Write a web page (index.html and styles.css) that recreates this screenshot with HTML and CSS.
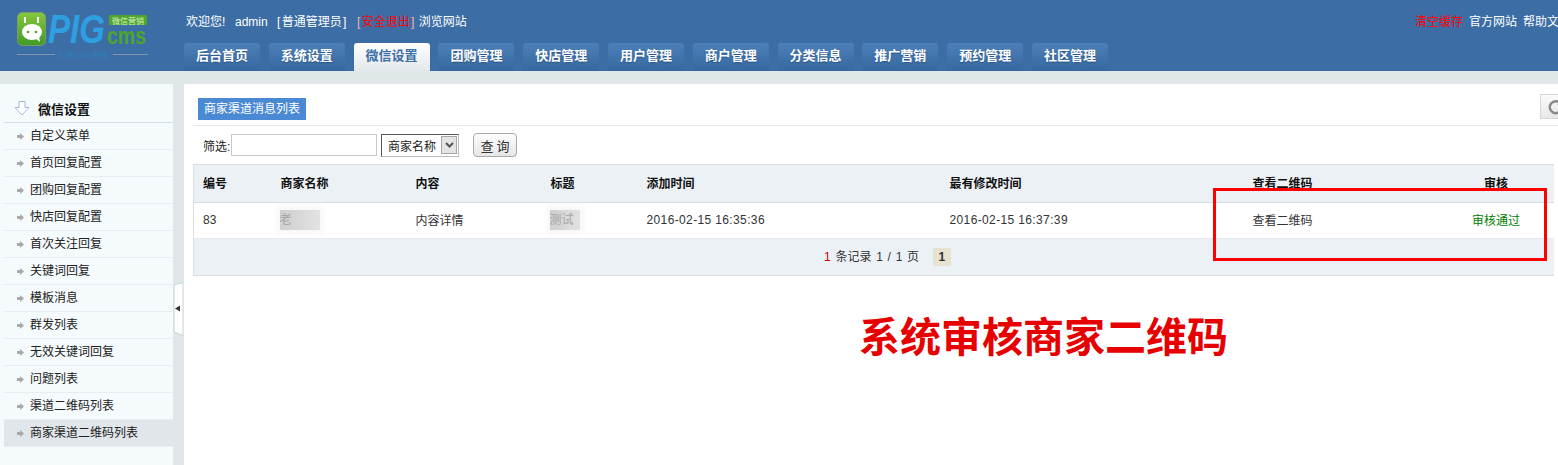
FILE: index.html
```html
<!DOCTYPE html>
<html>
    <head>
        <meta charset="utf-8">
        <title>微信设置</title>
        <link rel="stylesheet" href="styles.css">
    </head>
    <body>
        <div class="header">
            <div class="logo">
                <svg width="150" height="62" viewBox="0 0 150 62">
                    <defs>
                        <linearGradient id="logoGreen" x1="0" y1="0" x2="0" y2="1">
                            <stop offset="0" stop-color="#86c83c"/>
                            <stop offset="1" stop-color="#3f9a26"/>
                        </linearGradient>
                    </defs>
                    <rect x="17.500" y="12.500" width="28" height="33" rx="5" fill="url(#logoGreen)" stroke="#7d9c6a"/>
                    <rect x="24" y="17" width="2" height="6" fill="#fff"/>
                    <rect x="37" y="17" width="2" height="6" fill="#fff"/>
                    <ellipse cx="32" cy="32" rx="10" ry="8" fill="#fff"/>
                    <path d="M35 38l5 4-1-6z" fill="#fff"/>
                    <circle cx="28" cy="32" r="1.300" fill="#4fa52c"/>
                    <circle cx="36" cy="32" r="1.300" fill="#4fa52c"/>
                    <text x="48" y="43" class="logo-pig" textLength="57" lengthAdjust="spacingAndGlyphs">PIG</text>
                    <rect x="109" y="15" width="38" height="10" fill="#4fa52c"/>
                    <text x="112" y="23.500" class="logo-small">微信营销</text>
                    <text x="107" y="44" class="logo-cms" textLength="39" lengthAdjust="spacingAndGlyphs">cms</text>
                    <path d="M17 54.500h38M113 54.500h35" stroke="#7f95a8"/>
                    <text x="58" y="58" class="logo-tag">小猪CMS系统</text>
                </svg>
            </div>
            <div class="header-main">
                <div class="top-line">
                    <div class="user-info">
                        <span class="welcome">欢迎您!</span>
                        <span class="user-name">admin</span>
                        <span class="role"><i class="bracket">[</i>普通管理员<i class="bracket">]</i></span>
                        <span class="logout"><i class="bracket pink">[</i><span class="red">安全退出</span><i class="bracket pink">]</i></span>
                        <span class="browse">浏览网站</span>
                    </div>
                    <div class="top-links">
                        <span class="red">清空缓存</span>
                        <span>官方网站</span>
                        <span>帮助文档</span>
                    </div>
                </div>
                <div class="tabs">
                    <a class="tab">后台首页</a>
                    <a class="tab">系统设置</a>
                    <a class="tab active">微信设置</a>
                    <a class="tab">团购管理</a>
                    <a class="tab">快店管理</a>
                    <a class="tab">用户管理</a>
                    <a class="tab">商户管理</a>
                    <a class="tab">分类信息</a>
                    <a class="tab">推广营销</a>
                    <a class="tab">预约管理</a>
                    <a class="tab">社区管理</a>
                </div>
            </div>
        </div>

        <div class="content">
            <div class="sidebar">
                <div class="side-title">
                    <svg width="16" height="15" viewBox="0 0 16 15"><path d="M5 .5h6v6h4l-7 7.500-7-7.500h4z" fill="#fff" stroke="#a3b8d6"/></svg>
                    <span>微信设置</span>
                </div>
                <ul class="side-menu">
                    <li>自定义菜单</li>
                    <li>首页回复配置</li>
                    <li>团购回复配置</li>
                    <li>快店回复配置</li>
                    <li>首次关注回复</li>
                    <li>关键词回复</li>
                    <li>模板消息</li>
                    <li>群发列表</li>
                    <li>无效关键词回复</li>
                    <li>问题列表</li>
                    <li>渠道二维码列表</li>
                    <li class="current">商家渠道二维码列表</li>
                </ul>
            </div>
            <div class="gutter">
                <svg class="toggle" width="10" height="54" viewBox="0 0 10 54">
                    <path d="M10 .5L1 3v47l9 3.500z" fill="#fff" stroke="#c9d2d6"/>
                    <path d="M2 26.500l5-3v6z" fill="#333"/>
                </svg>
            </div>
            <div class="main">
                <div class="page-title">
                    <span class="title-label">商家渠道消息列表</span>
                    <div class="refresh">
                        <svg width="18" height="18" viewBox="0 0 18 18"><path d="M14.500 5.500A6 6 0 1 0 15.500 11" fill="none" stroke="#8a8a8a" stroke-width="2.500"/><path d="M11 7h6V1z" fill="#8a8a8a"/></svg>
                    </div>
                </div>
                <div class="filter">
                    <label>筛选:</label>
                    <input type="text" class="filter-input">
                    <div class="fake-select">
                        <span>商家名称</span>
                        <b class="select-arrow"><svg width="9" height="6" viewBox="0 0 9 6"><path d="M1 1l3.500 3.500L8 1" fill="none" stroke="#555" stroke-width="2"/></svg></b>
                    </div>
                    <button class="query">查 询</button>
                </div>
                <table class="list">
                    <colgroup>
                        <col class="c1"><col class="c2"><col class="c3"><col class="c4"><col class="c5"><col class="c6"><col class="c7"><col class="c8">
                    </colgroup>
                    <thead>
                        <tr>
                            <th>编号</th>
                            <th>商家名称</th>
                            <th>内容</th>
                            <th>标题</th>
                            <th>添加时间</th>
                            <th>最有修改时间</th>
                            <th>查看二维码</th>
                            <th class="center">审核</th>
                        </tr>
                    </thead>
                    <tbody>
                        <tr>
                            <td>83</td>
                            <td><span class="blur-box wide">老</span></td>
                            <td>内容详情</td>
                            <td><span class="blur-box">测试</span></td>
                            <td class="date">2016-02-15 16:35:36</td>
                            <td class="date">2016-02-15 16:37:39</td>
                            <td>查看二维码</td>
                            <td class="center passed">审核通过</td>
                        </tr>
                    </tbody>
                    <tfoot>
                        <tr>
                            <td colspan="6" class="pager-cell">
                                <div class="pager"><span class="count">1</span> 条记录 1 / 1 页 <b class="page-no">1</b></div>
                            </td>
                            <td colspan="2"></td>
                        </tr>
                    </tfoot>
                </table>
            </div>
        </div>

        <!-- annotation drawn over the screenshot -->
        <div class="mark-box"></div>
        <div class="mark-text">系统审核商家二维码</div>
    </body>
</html>
```

FILE: styles.css
```css
html, body {
    margin: 0;
    height: 465px;
    overflow: hidden;
}
body {
    background: #dfe7e9;
    color: #333;
    font: 12px "Liberation Sans", "Noto Sans CJK SC", sans-serif;
}
.header {
    display: flex;
    height: 71px;
    background: #3c6ea5;
}
.logo {
    width: 184px;
    flex: none;
}
.logo svg {
    display: block;
}
.logo-pig {
    fill: #2e9fe0;
    font: italic bold 40px "Liberation Sans", sans-serif;
}
.logo-cms {
    fill: #4fa52c;
    font: bold 24px "Liberation Sans", sans-serif;
}
.logo-small {
    fill: #d8efc8;
    font-size: 8px;
}
.logo-tag {
    fill: #2f7fb8;
    font-size: 8px;
}
.header-main {
    flex: 1;
    min-width: 0;
}
.top-line {
    display: flex;
    justify-content: space-between;
    height: 43px;
    color: #fff;
    line-height: 44px;
    white-space: nowrap;
}
.user-info {
    display: flex;
    padding-left: 2px;
}
.welcome {
    width: 49px;
}
.role {
    margin-left: 8px;
}
.logout {
    margin-left: 8px;
}
.browse {
    margin-left: 3px;
}
.bracket {
    display: inline-block;
    width: 6px;
    font-style: normal;
    text-align: center;
}
.pink {
    color: #f3b0b0;
}
.top-links {
    display: flex;
    gap: 6px;
    width: 143px;
    flex: none;
    overflow: hidden;
}
.top-links span {
    flex: none;
}
.red {
    color: #f00;
}
.tabs {
    display: flex;
    gap: 8.800px;
    height: 28px;
}
.tab {
    width: 76px;
    flex: none;
    background: linear-gradient(#4d80b8, #35689f);
    border-radius: 3px 3px 0 0;
    color: #fff;
    font-size: 13px;
    font-weight: bold;
    line-height: 25px;
    text-align: center;
    text-shadow: 0 1px 1px #2a5587;
}
.tab.active {
    background: linear-gradient(#fff, #e3e8ec);
    color: #3c6ea5;
    text-shadow: none;
}
.content {
    display: flex;
    height: 381px;
    margin-top: 13px;
}
.sidebar {
    width: 173px;
    flex: none;
    box-sizing: border-box;
    padding-left: 4px;
    background: #f5fafd;
}
.side-title {
    display: flex;
    align-items: center;
    gap: 8px;
    height: 39px;
    box-sizing: border-box;
    padding: 11px 0 0 10px;
    border-bottom: 1px solid #d3dee6;
    color: #111;
    font-size: 13px;
    font-weight: bold;
}
.side-menu {
    margin: 0;
    padding: 0;
    list-style: none;
}
.side-menu li {
    position: relative;
    height: 26px;
    padding-left: 26px;
    border-bottom: 1px solid #e6eef2;
    color: #222;
    line-height: 26px;
}
.side-menu li::before {
    content: "";
    position: absolute;
    left: 13px;
    top: 10px;
    width: 7px;
    height: 7px;
    background: #a9a9a9;
    clip-path: polygon(0 30%, 45% 30%, 45% 0, 100% 50%, 45% 100%, 45% 70%, 0 70%);
}
.side-menu li.current {
    background: #e0e6e9;
}
.gutter {
    position: relative;
    width: 11px;
    flex: none;
}
.toggle {
    position: absolute;
    left: 0;
    top: 198px;
}
.main {
    flex: 1;
    min-width: 0;
    background: #fff;
    padding: 14px 0 0 9px;
    overflow: hidden;
}
.page-title {
    display: flex;
    justify-content: space-between;
    height: 27px;
    border-bottom: 1px solid #e8e8e8;
}
.title-label {
    width: 108px;
    height: 22px;
    margin-left: 5px;
    background: #4a8ad4;
    color: #fff;
    line-height: 22px;
    text-align: center;
}
.refresh {
    width: 30px;
    height: 25px;
    flex: none;
    margin: -4px -12px 0 0;
    box-sizing: border-box;
    padding: 3px 0 0 5px;
    background: linear-gradient(#fafafa, #e8e8e8);
    border: 1px solid #d5d5d5;
}
.filter {
    display: flex;
    align-items: center;
    height: 38px;
    padding-left: 10px;
    color: #222;
}
.filter label {
    width: 28px;
}
.filter-input {
    width: 146px;
    height: 22px;
    box-sizing: border-box;
    padding: 0;
    border: 1px solid #c9c9c9;
}
.fake-select {
    display: flex;
    align-items: center;
    justify-content: space-between;
    width: 78px;
    height: 23px;
    box-sizing: border-box;
    margin-left: 4px;
    padding: 0 1px 0 6px;
    border: 1px solid #bbb;
    border-top-color: #555;
    border-left-color: #555;
}
.select-arrow {
    display: flex;
    align-items: center;
    justify-content: center;
    width: 16px;
    height: 18px;
    background: #e4e4e4;
    border: 1px solid #a5a5a5;
    box-sizing: border-box;
}
.query {
    width: 44px;
    height: 24px;
    margin-left: 14px;
    padding: 0;
    background: linear-gradient(#fdfdfd, #e6e6e6);
    border: 1px solid #a9a9a9;
    border-radius: 4px;
    color: #333;
    font: 13px "Noto Sans CJK SC", sans-serif;
}
.list {
    width: 1360px;
    table-layout: fixed;
    border-collapse: collapse;
    border: 1px solid #dedede;
    border-right: 0;
}
.c1 { width: 78px; }
.c2 { width: 135px; }
.c3 { width: 135px; }
.c4 { width: 96px; }
.c5 { width: 303px; }
.c6 { width: 303px; }
.c7 { width: 195px; }
.c8 { width: 115px; }
.list th, .list td {
    padding: 0 0 2px 9px;
    text-align: left;
    white-space: nowrap;
}
.list th {
    height: 35px;
    background: #ecf1f6;
    border-bottom: 1px solid #d3dde6;
    color: #111;
    font-weight: bold;
}
.list tbody td {
    height: 33px;
    border-bottom: 1px solid #e6eaee;
}
.list tfoot td {
    height: 34px;
    background: #ecf1f6;
}
.list .center {
    padding-left: 0;
    text-align: center;
}
.date {
    letter-spacing: .37px;
}
.passed {
    color: #008000;
}
.blur-box {
    display: inline-block;
    width: 40px;
    height: 20px;
    margin-left: -1px;
    background: linear-gradient(90deg, #cfcfcf, #e2e2e2);
    color: #a5a5a5;
    line-height: 20px;
    vertical-align: middle;
    box-shadow: 0 0 6px 3px #f6f6f6;
}
.blur-box:not(.wide) {
    width: 30px;
}
.pager {
    padding-left: 630px;
    word-spacing: 1.400px;
}
.pager-cell.pager-cell {
    padding-left: 0;
    text-align: left;
}
.count {
    color: #c00;
}
.page-no {
    display: inline-block;
    width: 18px;
    height: 18px;
    margin-left: 9px;
    background: #e8e2d0;
    color: #333;
    line-height: 18px;
    text-align: center;
}
.mark-box {
    position: absolute;
    left: 1213px;
    top: 188px;
    width: 328px;
    height: 67px;
    border: 3px solid #f00;
}
.mark-text {
    position: absolute;
    left: 859px;
    top: 309px;
    color: #e60000;
    font-size: 41px;
    font-weight: bold;
    line-height: 58px;
    white-space: nowrap;
}
```
